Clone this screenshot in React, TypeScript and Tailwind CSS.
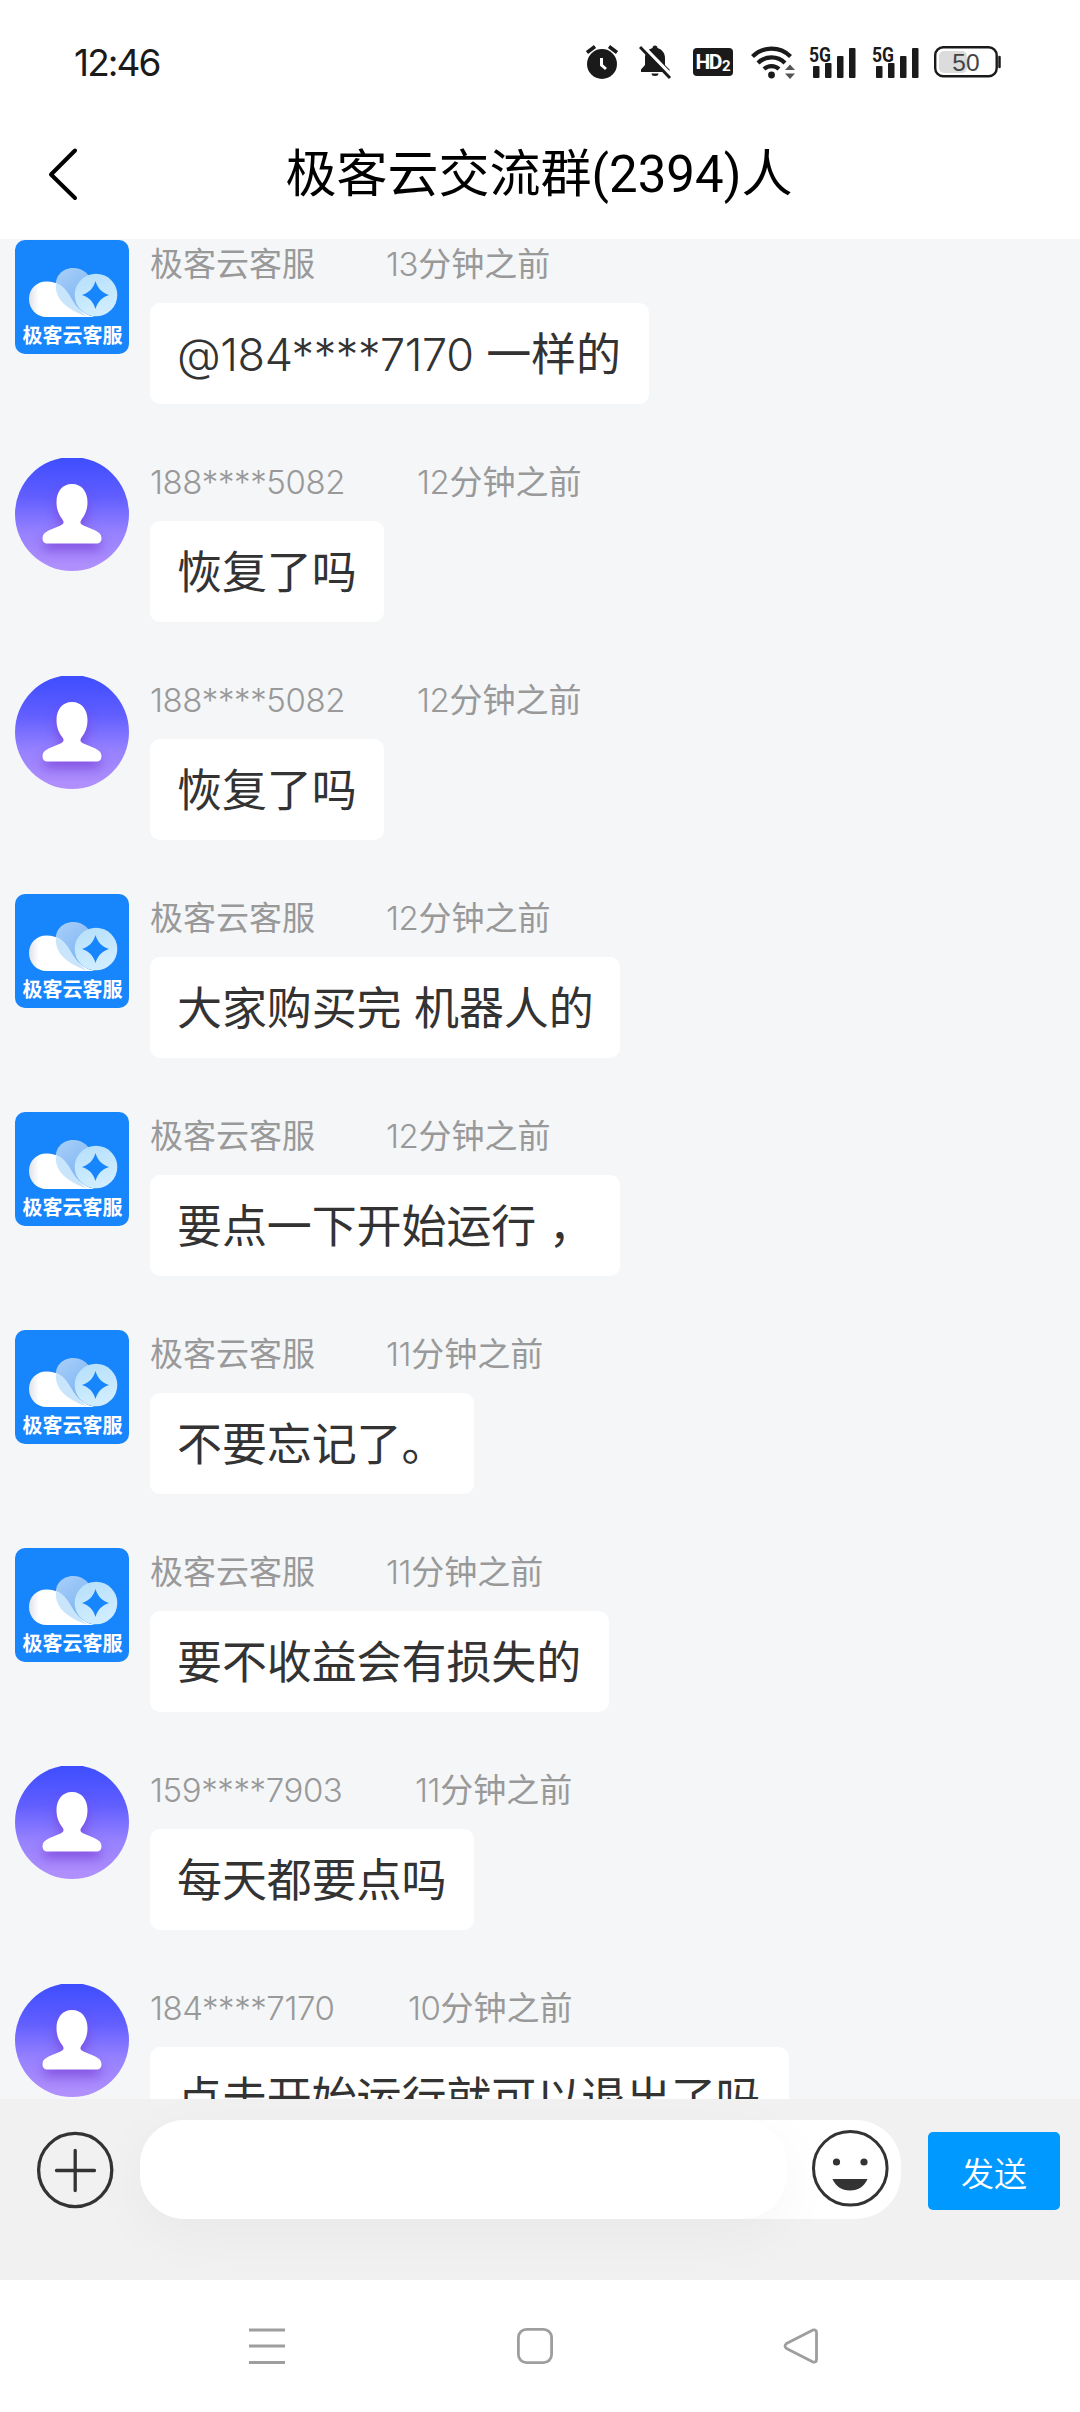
type Message = {
  kind: 'service' | 'user';
  name: string;
  time: string;
  text: string;
  nameClass: string;
  bubbleClass: string;
};

const SERVICE = '极客云客服';

const messages: Message[] = [
  { kind: 'service', name: SERVICE, time: '13分钟之前', text: '@184****7170 一样的', nameClass: 'w-[236px]', bubbleClass: 'w-[499px]' },
  { kind: 'user', name: '188****5082', time: '12分钟之前', text: '恢复了吗', nameClass: 'w-[267px]', bubbleClass: 'w-[234px]' },
  { kind: 'user', name: '188****5082', time: '12分钟之前', text: '恢复了吗', nameClass: 'w-[267px]', bubbleClass: 'w-[234px]' },
  { kind: 'service', name: SERVICE, time: '12分钟之前', text: '大家购买完 机器人的', nameClass: 'w-[236px]', bubbleClass: 'w-[470px]' },
  { kind: 'service', name: SERVICE, time: '12分钟之前', text: '要点一下开始运行 ，', nameClass: 'w-[236px]', bubbleClass: 'w-[470px]' },
  { kind: 'service', name: SERVICE, time: '11分钟之前', text: '不要忘记了。', nameClass: 'w-[236px]', bubbleClass: 'w-[324px]' },
  { kind: 'service', name: SERVICE, time: '11分钟之前', text: '要不收益会有损失的', nameClass: 'w-[236px]', bubbleClass: 'w-[459px]' },
  { kind: 'user', name: '159****7903', time: '11分钟之前', text: '每天都要点吗', nameClass: 'w-[265px]', bubbleClass: 'w-[324px]' },
  { kind: 'user', name: '184****7170', time: '10分钟之前', text: '点击开始运行就可以退出了吗', nameClass: 'w-[258px]', bubbleClass: 'w-[639px]' },
];

/** Sets digits and symbols in a lighter face beside regular-weight Chinese. */
function Mixed({ text }: { text: string }) {
  return (
    <>
      {text.split(/([@*\d]+)/).map((run, index) =>
        /^[@*\d]/.test(run) ? (
          <span key={index} className="font-[350] tracking-[-0.400px]">{run}</span>
        ) : (
          run
        ),
      )}
    </>
  );
}

function Signal() {
  return (
    <svg width="47" height="42" viewBox="0 -4 47 42" fill="#1a1a1a">
      <text x="0" y="16.500" fontSize="20.500" fontWeight="700" textLength="22" lengthAdjust="spacingAndGlyphs" fontFamily="Roboto">5G</text>
      <rect x="4" y="21" width="6.500" height="12" rx="1" />
      <rect x="16" y="18" width="6.500" height="15" rx="1" />
      <rect x="28" y="11" width="6.500" height="22" rx="1" />
      <rect x="40" y="3" width="6.500" height="30" rx="1" />
    </svg>
  );
}

function StatusBar() {
  return (
    <div className="flex h-[126px] items-center justify-between pb-[2px] pl-[74px] pr-[78px]">
      <span className="font-['Inter'] text-[37px] leading-none tracking-[-1.900px] text-[#1a1a1a]">12:46</span>
      <div className="flex items-center">
        <svg width="34" height="36" viewBox="0 0 34 36" className="mr-[19px]">
          <circle cx="16" cy="20" r="15" fill="#1a1a1a" />
          <path d="M1 8.500l8-6M31 8.500l-8-6" stroke="#1a1a1a" strokeWidth="3.500" fill="none" />
          <path d="M15.500 14v7l4.500 4" stroke="#fff" strokeWidth="3" fill="none" />
        </svg>
        <svg width="34" height="36" viewBox="0 0 34 36" className="mr-[20px]">
          <path d="M16 1.500c1.500 0 2.500 1 2.500 2.500 5 1.500 7.500 5.500 7.500 10v7l4.500 4.500V28H2v-2.500L6 21v-7c0-4.500 2.500-8.500 7.500-10 0-1.500 1-2.500 2.500-2.500z" fill="#1a1a1a" />
          <path d="M12.500 29.500h7a3.500 2.500 0 0 1-7 0z" fill="#1a1a1a" />
          <path d="M0 6L8 0L6 9z" fill="#fff" />
          <path d="M3 1L33 32" stroke="#fff" strokeWidth="3.500" />
          <path d="M1 3L31 34" stroke="#1a1a1a" strokeWidth="3" />
        </svg>
        <div className="mr-[18px] flex h-[28px] w-[40px] items-end justify-center rounded-[4px] bg-[#1a1a1a] font-['Roboto'] font-bold text-white">
          <span className="text-[21px] leading-[27px] tracking-[-1.500px]">HD</span>
          <span className="pl-px text-[15px] leading-[20px]">2</span>
        </div>
        <svg width="45" height="36" viewBox="0 0 45 36" className="mr-[13px]">
          <g fill="none" stroke="#1a1a1a" strokeWidth="4.200">
            <path d="M1.500 12.500a27 27 0 0 1 38 0" />
            <path d="M7 19a19 19 0 0 1 27 0" />
            <path d="M13 25a11 11 0 0 1 15 0" />
          </g>
          <circle cx="20.500" cy="31" r="3.400" fill="#1a1a1a" />
          <path d="M34 26l5-5.500 5 5.500zM34 29.500l5 5.500 5-5.500z" fill="#555" />
        </svg>
        <Signal />
        <div className="w-[16px]" />
        <Signal />
        <svg width="68" height="32" viewBox="0 0 68 32" className="ml-[15px]">
          <rect x="5" y="5" width="28" height="22" rx="5" fill="#dcdcdc" />
          <rect x="1.200" y="1.200" width="61.500" height="29" rx="8" fill="none" stroke="#1a1a1a" strokeWidth="2.400" />
          <path d="M65.500 11v10" stroke="#1a1a1a" strokeWidth="2.500" strokeLinecap="round" />
          <text x="32" y="24.500" fontSize="24.500" textAnchor="middle" fill="#444" fontFamily="Liberation Sans">50</text>
        </svg>
      </div>
    </div>
  );
}

function Header() {
  return (
    <div className="grid h-[113px] grid-cols-[160px_1fr_160px] items-center">
      <svg width="34" height="56" viewBox="0 0 34 56" className="mb-[18px] ml-[47px]">
        <path d="M28 4.500L4 28.500L28 52" fill="none" stroke="#000" strokeWidth="4" strokeLinecap="round" strokeLinejoin="round" />
      </svg>
      <h1 className="mb-[17px] whitespace-nowrap pr-[2px] text-center font-['Roboto','Noto_Sans_CJK_SC',sans-serif] text-[51px] leading-none text-black">
        极客云交流群(2394)人
      </h1>
    </div>
  );
}

function ServiceAvatar() {
  return (
    <svg width="114" height="114" viewBox="0 0 114 114" className="shrink-0">
      <defs>
        <linearGradient id="petal" x1="0" y1="0" x2="0.600" y2="1">
          <stop offset="0" stopColor="#a9d0fa" />
          <stop offset="1" stopColor="#7ab2f0" />
        </linearGradient>
        <linearGradient id="disc" x1="0" y1="0" x2="0.300" y2="1">
          <stop offset="0" stopColor="#b4dffa" />
          <stop offset="1" stopColor="#d0edff" />
        </linearGradient>
        <linearGradient id="puff" x1="0" y1="0" x2="1" y2="0">
          <stop offset="0" stopColor="#e0e2e8" />
          <stop offset="0.150" stopColor="#fff" />
        </linearGradient>
      </defs>
      <rect width="114" height="114" rx="10" fill="#1785fb" />
      <path d="M41 48C39 37 47 28 58 28c10 0 17 6 19 16L72 76C58 70 44 62 41 48z" fill="url(#petal)" />
      <path d="M31.500 77C21.500 77 14 69 14 59s7.500-17.500 17.500-17.500c11 0 17 5 22 13C58 62 64 74 80 77z" fill="url(#puff)" />
      <path d="M41 43.500c6 2 10 6 13.500 12C59 63 64 71 72 76.500 56 71 39 61 41 43.500z" fill="#c9e5fc" />
      <circle cx="81" cy="55" r="21.300" fill="url(#disc)" />
      <path d="M80.500 41c2 7 6 11.500 13.500 14-7.500 2.500-11.500 7-13.500 14-2-7-6-11.500-13.500-14 7.500-2.500 11.500-7 13.500-14z" fill="#1785fb" />
      <text x="7.500" y="103" fontSize="20" fontWeight="700" textLength="100" lengthAdjust="spacingAndGlyphs" fill="#fff" fontFamily="Noto Sans CJK SC">极客云客服</text>
    </svg>
  );
}

function UserAvatar() {
  return (
    <svg width="114" height="114" viewBox="0 0 114 114" className="shrink-0">
      <defs>
        <linearGradient id="user" x1="0" y1="0" x2="0" y2="1">
          <stop offset="0" stopColor="#3d4dff" />
          <stop offset="0.350" stopColor="#615eff" />
          <stop offset="0.650" stopColor="#9480ff" />
          <stop offset="1" stopColor="#b391fc" />
        </linearGradient>
        <filter id="glow" x="-40%" y="-40%" width="180%" height="180%">
          <feGaussianBlur stdDeviation="6" />
        </filter>
        <path id="person" d="M57 26c-10 0-15.500 8-15.500 18 0 8 2.500 13 6 17.500 2 3 1 4.500-2 6C38 71 27.500 73 27.500 80c0 4 2 5.500 5 5.500h49c3 0 5-1.500 5-5.500 0-7-10.500-9-18-12.500-3-1.500-4-3-2-6 3.500-4.500 6-9.500 6-17.500 0-10-5.500-18-15.500-18z" />
      </defs>
      <circle cx="57" cy="56" r="57" fill="url(#user)" />
      <use href="#person" y="7" fill="#7434cf" opacity="0.600" filter="url(#glow)" />
      <use href="#person" fill="#fff" />
    </svg>
  );
}

function MessageRow({ message }: { message: Message }) {
  return (
    <div className="flex h-[218px] shrink-0 gap-[21px]">
      {message.kind === 'service' ? <ServiceAvatar /> : <UserAvatar />}
      <div>
        <div className="flex h-[63px] whitespace-nowrap pt-[2px] font-['Inter','Noto_Sans_CJK_SC',sans-serif] text-[33px] leading-[44px] text-[#999]">
          <div className={message.nameClass}>
            <Mixed text={message.name} />
          </div>
          <div>
            <Mixed text={message.time} />
          </div>
        </div>
        <div className={`h-[101px] whitespace-nowrap rounded-[10px] bg-white pl-[27px] pt-px font-['Inter','Noto_Sans_CJK_SC',sans-serif] text-[45px] leading-[101px] tracking-[-0.100px] text-[#333] ${message.bubbleClass}`}>
          <Mixed text={message.text} />
        </div>
      </div>
    </div>
  );
}

function Composer() {
  return (
    <div className="relative flex h-[181px] shrink-0 items-start bg-[#f1f1f1] pt-[21px]">
      <svg width="78" height="80" viewBox="0 0 78 80" className="ml-[36px] mt-[10px]" fill="none" stroke="#333" strokeWidth="3.300" strokeLinecap="round">
        <circle cx="39.200" cy="40" r="36.600" />
        <path d="M39.200 20.500v40M20.500 40.500h38" />
      </svg>
      <div className="ml-[26px] flex h-[99px] w-[761px] rounded-[45px] bg-white">
        <div className="h-[99px] w-[647px] rounded-[45px] bg-white shadow-[0_15px_60px_rgba(0,0,0,0.04)]" />
        <svg width="78" height="80" viewBox="0 0 78 80" className="ml-[24px] mt-[8px]">
          <circle cx="39.300" cy="40.300" r="36.800" fill="none" stroke="#333" strokeWidth="3" />
          <circle cx="25.500" cy="34" r="3.600" fill="#333" />
          <circle cx="53" cy="34" r="3.600" fill="#333" />
          <path d="M21.500 51h35c-3 7-9 11.500-17.500 11.500S24.500 58 21.500 51z" fill="#333" />
        </svg>
      </div>
      <button className="ml-[27px] mt-[12px] h-[78px] w-[132px] rounded-[5px] bg-[#0099ff] pt-[2px] font-['Noto_Sans_CJK_SC',sans-serif] text-[33px] font-[350] leading-none text-white">发送</button>
    </div>
  );
}

function NavBar() {
  return (
    <div className="flex h-[132px] items-center bg-white pl-[248px]">
      <svg width="38" height="36" viewBox="0 0 38 36" stroke="#9e9e9e" strokeWidth="3">
        <path d="M1 2h36M1 18h36M1 34.500h36" />
      </svg>
      <svg width="36" height="36" viewBox="0 0 36 36" fill="none" stroke="#9e9e9e" strokeWidth="2.800" className="ml-[231px]">
        <rect x="1.400" y="1.400" width="33.200" height="33.200" rx="8" />
      </svg>
      <svg width="38" height="36" viewBox="0 0 38 36" fill="none" stroke="#9e9e9e" strokeWidth="2.800" strokeLinejoin="round" className="ml-[229px]">
        <path d="M4.500 15.500L30.500 2.200Q34.500 1 34.500 4.500V31.500Q34.500 35 30.500 33.800L4.500 20.500Q1.500 18 4.500 15.500z" />
      </svg>
    </div>
  );
}

export default function App() {
  return (
    <div className="flex h-[2412px] w-[1080px] flex-col overflow-hidden bg-white">
      <StatusBar />
      <Header />
      <main className="flex h-[1860px] flex-col overflow-hidden bg-[#f4f6f8] pl-[15px] pt-px">
        {messages.map((message, index) => (
          <MessageRow key={index} message={message} />
        ))}
      </main>
      <Composer />
      <NavBar />
    </div>
  );
}
